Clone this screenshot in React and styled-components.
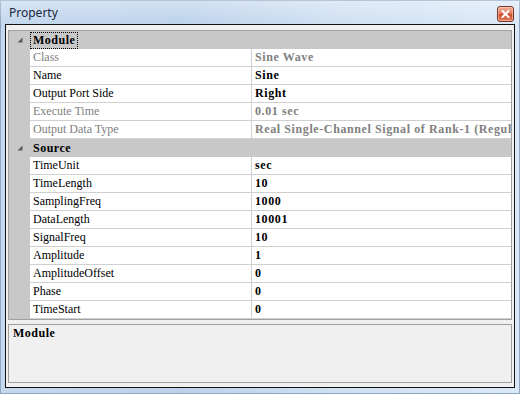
import React from 'react';
import styled, { createGlobalStyle } from 'styled-components';

const GlobalStyle = createGlobalStyle`
  html, body {
    margin: 0;
    padding: 0;
    background: #ffffff;
  }
  * {
    box-sizing: border-box;
  }
`;

const Window = styled.div`
  width: 520px;
  height: 394px;
  display: flex;
  flex-direction: column;
  background: linear-gradient(to right, #c4d8ee 0%, #bcd2ea 35%, #cfe0f3 65%, #dae8f7 100%);
  box-shadow: inset 0 0 0 1px #8fa6c2;
`;

const TitleBar = styled.div`
  height: 24px;
  flex: none;
  display: flex;
  align-items: center;
  justify-content: space-between;
  padding: 0 6px 0 9px;
  background: linear-gradient(to bottom, rgba(255, 255, 255, 0.35), rgba(255, 255, 255, 0));
`;

const Title = styled.span`
  font-family: 'Noto Sans', 'Open Sans', sans-serif;
  font-size: 12px;
  color: #1b2840;
  line-height: 16px;
  margin-top: 2px;
`;

const CloseButton = styled.div`
  width: 17px;
  height: 16px;
  margin-top: 3px;
  border: 1px solid #7a3322;
  border-radius: 3px;
  background: linear-gradient(to bottom, #f0b29c 0%, #e07a5c 45%, #cc4a2c 55%, #e0805f 100%);
  display: flex;
  align-items: center;
  justify-content: center;
  box-shadow: inset 0 0 0 1px rgba(255, 225, 205, 0.5);
`;

const Client = styled.div`
  margin: 0 5px;
  height: 364px;
  flex: none;
  border: 1px solid #111111;
  background: #f0f0f0;
  padding: 5px 2px 4px 2px;
  display: flex;
  flex-direction: column;
  gap: 4px;
`;

const Grid = styled.div`
  height: 290px;
  flex: none;
  border: 1px solid #a0a0a0;
  background: #ffffff;
  display: flex;
  flex-direction: column;
  font-family: 'Liberation Serif', 'Times New Roman', serif;
  font-size: 12px;
`;

const Row = styled.div`
  height: 18px;
  flex: none;
  display: grid;
  grid-template-columns: 21px 222px 1fr;
  background: ${(p) => (p.$category ? '#c8c8c8' : '#ffffff')};
`;

const Margin = styled.div`
  background: #c8c8c8;
  display: flex;
  align-items: center;
  padding-left: 8px;
`;

const CategoryCell = styled.div`
  grid-column: 2 / 4;
  display: flex;
  align-items: center;
`;

const CategoryLabel = styled.span`
  font-weight: bold;
  letter-spacing: 0.5px;
  color: #000000;
  line-height: 15px;
  padding: 0 2px;
  border: 1px dotted ${(p) => (p.$focused ? '#000000' : 'transparent')};
`;

const NameCell = styled.div`
  border-bottom: 1px solid #d0d0d0;
  border-right: 1px solid #d0d0d0;
  padding-left: 3px;
  line-height: 17px;
  white-space: nowrap;
  overflow: hidden;
  color: ${(p) => (p.$readonly ? '#808080' : '#000000')};
`;

const ValueCell = styled.div`
  border-bottom: 1px solid #d0d0d0;
  padding-left: 3px;
  line-height: 17px;
  white-space: nowrap;
  overflow: hidden;
  font-weight: bold;
  letter-spacing: 0.6px;
  color: ${(p) => (p.$readonly ? '#808080' : '#000000')};
`;

const Description = styled.div`
  height: 59px;
  flex: none;
  border: 1px solid #a0a0a0;
  background: #f0f0f0;
  padding: 1px 4px;
  font-family: 'Liberation Serif', 'Times New Roman', serif;
  font-size: 12px;
  font-weight: bold;
  letter-spacing: 0.5px;
  line-height: 14px;
  color: #000000;
`;

const Expander = () => (
  <svg width="6" height="6" viewBox="0 0 6 6">
    <polygon points="5.5,0.5 5.5,5.5 0.5,5.5" fill="#5a5a5a" />
  </svg>
);

const CloseGlyph = () => (
  <svg width="9" height="8" viewBox="0 0 9 8">
    <path d="M1.5 1 L7.5 7 M7.5 1 L1.5 7" stroke="#ffffff" strokeWidth="2" strokeLinecap="square" />
  </svg>
);

const categories = [
  {
    name: 'Module',
    focused: true,
    items: [
      { name: 'Class', value: 'Sine Wave', readonly: true },
      { name: 'Name', value: 'Sine' },
      { name: 'Output Port Side', value: 'Right' },
      { name: 'Execute Time', value: '0.01 sec', readonly: true },
      { name: 'Output Data Type', value: 'Real Single-Channel Signal of Rank-1 (Regular)', readonly: true },
    ],
  },
  {
    name: 'Source',
    items: [
      { name: 'TimeUnit', value: 'sec' },
      { name: 'TimeLength', value: '10' },
      { name: 'SamplingFreq', value: '1000' },
      { name: 'DataLength', value: '10001' },
      { name: 'SignalFreq', value: '10' },
      { name: 'Amplitude', value: '1' },
      { name: 'AmplitudeOffset', value: '0' },
      { name: 'Phase', value: '0' },
      { name: 'TimeStart', value: '0' },
    ],
  },
];

export default function App() {
  return (
    <>
      <GlobalStyle />
      <Window>
        <TitleBar>
          <Title>Property</Title>
          <CloseButton>
            <CloseGlyph />
          </CloseButton>
        </TitleBar>
        <Client>
          <Grid>
            {categories.map((cat) => (
              <React.Fragment key={cat.name}>
                <Row $category>
                  <Margin>
                    <Expander />
                  </Margin>
                  <CategoryCell>
                    <CategoryLabel $focused={cat.focused}>{cat.name}</CategoryLabel>
                  </CategoryCell>
                </Row>
                {cat.items.map((item) => (
                  <Row key={item.name}>
                    <Margin />
                    <NameCell $readonly={item.readonly}>{item.name}</NameCell>
                    <ValueCell $readonly={item.readonly}>{item.value}</ValueCell>
                  </Row>
                ))}
              </React.Fragment>
            ))}
          </Grid>
          <Description>Module</Description>
        </Client>
      </Window>
    </>
  );
}
